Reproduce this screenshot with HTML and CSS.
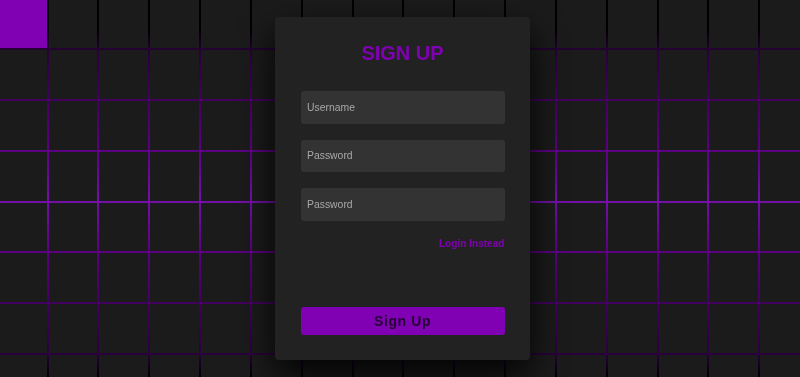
FILE: index.html
```html
<!DOCTYPE html>
<html lang="en">
<head>
<meta charset="utf-8">
<title>Sign Up</title>
<link rel="stylesheet" href="styles.css">
</head>
<body>
<section class="bg">
  <div class="grid">
    <span class="cell on"></span><span class="cell"></span><span class="cell"></span><span class="cell"></span><span class="cell"></span><span class="cell"></span><span class="cell"></span><span class="cell"></span><span class="cell"></span><span class="cell"></span><span class="cell"></span><span class="cell"></span><span class="cell"></span><span class="cell"></span><span class="cell"></span><span class="cell"></span><span class="cell"></span>
    <span class="cell"></span><span class="cell"></span><span class="cell"></span><span class="cell"></span><span class="cell"></span><span class="cell"></span><span class="cell"></span><span class="cell"></span><span class="cell"></span><span class="cell"></span><span class="cell"></span><span class="cell"></span><span class="cell"></span><span class="cell"></span><span class="cell"></span><span class="cell"></span><span class="cell"></span>
    <span class="cell"></span><span class="cell"></span><span class="cell"></span><span class="cell"></span><span class="cell"></span><span class="cell"></span><span class="cell"></span><span class="cell"></span><span class="cell"></span><span class="cell"></span><span class="cell"></span><span class="cell"></span><span class="cell"></span><span class="cell"></span><span class="cell"></span><span class="cell"></span><span class="cell"></span>
    <span class="cell"></span><span class="cell"></span><span class="cell"></span><span class="cell"></span><span class="cell"></span><span class="cell"></span><span class="cell"></span><span class="cell"></span><span class="cell"></span><span class="cell"></span><span class="cell"></span><span class="cell"></span><span class="cell"></span><span class="cell"></span><span class="cell"></span><span class="cell"></span><span class="cell"></span>
    <span class="cell"></span><span class="cell"></span><span class="cell"></span><span class="cell"></span><span class="cell"></span><span class="cell"></span><span class="cell"></span><span class="cell"></span><span class="cell"></span><span class="cell"></span><span class="cell"></span><span class="cell"></span><span class="cell"></span><span class="cell"></span><span class="cell"></span><span class="cell"></span><span class="cell"></span>
    <span class="cell"></span><span class="cell"></span><span class="cell"></span><span class="cell"></span><span class="cell"></span><span class="cell"></span><span class="cell"></span><span class="cell"></span><span class="cell"></span><span class="cell"></span><span class="cell"></span><span class="cell"></span><span class="cell"></span><span class="cell"></span><span class="cell"></span><span class="cell"></span><span class="cell"></span>
    <span class="cell"></span><span class="cell"></span><span class="cell"></span><span class="cell"></span><span class="cell"></span><span class="cell"></span><span class="cell"></span><span class="cell"></span><span class="cell"></span><span class="cell"></span><span class="cell"></span><span class="cell"></span><span class="cell"></span><span class="cell"></span><span class="cell"></span><span class="cell"></span><span class="cell"></span>
    <span class="cell"></span><span class="cell"></span><span class="cell"></span><span class="cell"></span><span class="cell"></span><span class="cell"></span><span class="cell"></span><span class="cell"></span><span class="cell"></span><span class="cell"></span><span class="cell"></span><span class="cell"></span><span class="cell"></span><span class="cell"></span><span class="cell"></span><span class="cell"></span><span class="cell"></span>
  </div>
</section>
<main class="overlay">
  <form class="card">
    <h2 class="title">SIGN UP</h2>
    <div class="fields">
      <input class="field" type="text" placeholder="Username">
      <input class="field" type="password" placeholder="Password">
      <input class="field" type="password" placeholder="Password">
    </div>
    <div class="links"><a class="link" href="#">Login Instead</a></div>
    <button class="submit" type="button">Sign Up</button>
  </form>
</main>
</body>
</html>
```

FILE: styles.css
```css
* {
  box-sizing: border-box;
}

html, body {
  margin: 0;
  padding: 0;
  height: 100%;
  overflow: hidden;
  background: #000;
  font-family: "Liberation Sans", Arial, sans-serif;
}

.bg {
  height: 100vh;
  overflow: hidden;
  background: linear-gradient(to bottom,
    #000 0%,
    #000 8%,
    #2a003c 14%,
    #44005f 27%,
    #5c0083 40%,
    #7410a8 53%,
    #5c0083 66%,
    #44005f 80%,
    #2a003c 94%,
    #000 100%);
}

.grid {
  display: grid;
  grid-template-columns: repeat(17, 48.85px);
  grid-auto-rows: 48.85px;
  gap: 2px;
  margin: -0.85px 0 0 -2.35px;
}

.cell {
  display: block;
  background: #1b1b1b;
}

.cell.on {
  background: #8000b4;
}

.overlay {
  position: fixed;
  inset: 0;
  display: flex;
  align-items: center;
  justify-content: center;
  padding-left: 5px;
}

.card {
  width: 255px;
  height: 343px;
  background: #222;
  border-radius: 4px;
  box-shadow: 0 15px 35px rgba(0, 0, 0, 0.9);
  padding: 25px 25.5px 25px;
  display: flex;
  flex-direction: column;
  margin: 0;
}

.title {
  margin: 0 0 26px;
  text-align: center;
  font-size: 20px;
  line-height: 23px;
  font-weight: 700;
  color: #8000b4;
}

.fields {
  display: flex;
  flex-direction: column;
  gap: 16px;
}

.field {
  display: block;
  width: 100%;
  height: 32.5px;
  border: none;
  outline: none;
  border-radius: 3px;
  background: #333;
  padding: 0 6.5px;
  font-family: "Liberation Sans", Arial, sans-serif;
  font-size: 10.4px;
  color: #aaa;
}

.field::placeholder {
  color: #a8a8a8;
}

.links {
  display: flex;
  justify-content: flex-end;
  margin-top: 17px;
  line-height: 12px;
}

.link {
  color: #8000b4;
  font-size: 10.1px;
  font-weight: 700;
  text-decoration: none;
}

.submit {
  margin-top: auto;
  width: 100%;
  height: 28.5px;
  border: none;
  border-radius: 3px;
  background: #8000b4;
  color: rgba(0, 0, 0, 0.72);
  font-family: "Liberation Sans", Arial, sans-serif;
  font-size: 14px;
  font-weight: 700;
  letter-spacing: 0.6px;
  padding: 0;
}
```
